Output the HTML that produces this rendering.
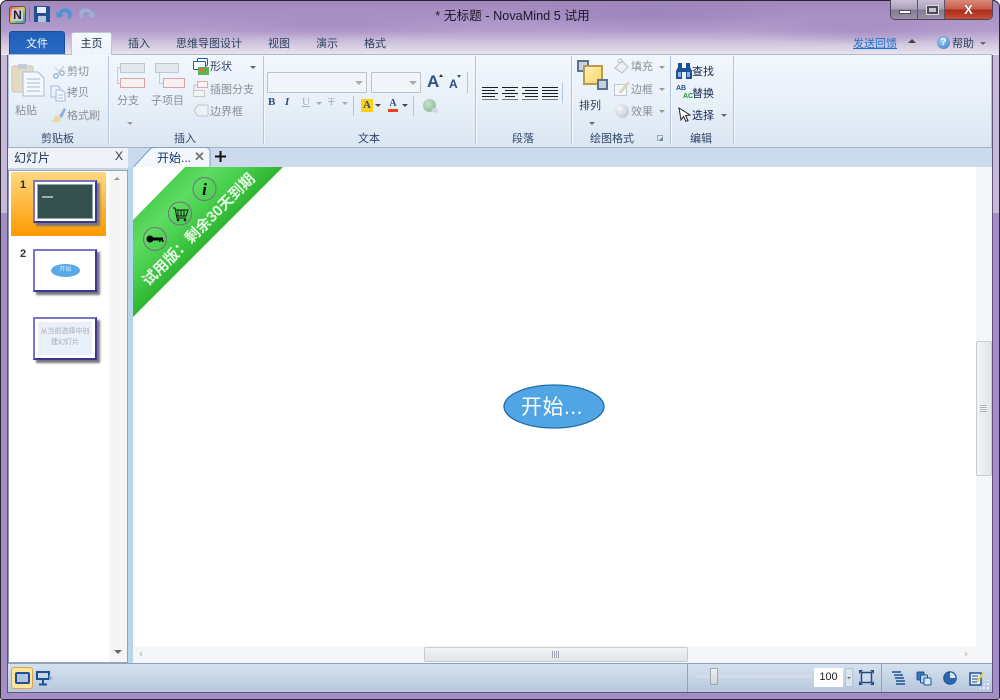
<!DOCTYPE html>
<html><head><meta charset="utf-8"><style>
*{box-sizing:border-box;margin:0;padding:0}
html,body{width:1000px;height:700px;overflow:hidden;background:#fff}
body{position:relative;font-family:"Liberation Sans","Noto Sans CJK SC",sans-serif;font-size:11px;color:#15284b}
.a{position:absolute;white-space:nowrap}
.g{color:#8b8f96}
.t{color:#2d3f5f}
.sep{position:absolute;top:56px;height:88px;width:1px;background:#b5c6da;box-shadow:1px 0 0 #f4f8fd}
.arr{position:absolute;width:0;height:0;border-left:3px solid transparent;border-right:3px solid transparent;border-top:3px solid #666}
.gl{position:absolute;top:130px;color:#2f4468;font-size:11px;white-space:nowrap}
.thumb{position:absolute;left:33px;width:64px;height:43px;background:#fff;border:2px solid;border-color:#7a74c8 #3b3694 #3b3694 #7a74c8;box-shadow:3px 3px 2px #77777a}
svg{position:absolute;overflow:visible}
</style></head><body>
<div class="a" style="left:0;top:0;width:1000px;height:700px;background:#c8b8da;border-radius:7px 7px 3px 3px"></div>
<div class="a" style="left:1px;top:213px;width:7px;height:480px;background:#a48dc4"></div>
<div class="a" style="left:992px;top:213px;width:7px;height:480px;background:#a48dc4"></div>
<div class="a" style="left:1px;top:692px;width:998px;height:7px;background:#a48dc4"></div>
<div class="a" style="left:1px;top:1px;width:998px;height:54px;border-radius:6px 6px 0 0;overflow:hidden;background:radial-gradient(ellipse 150px 14px at 330px 24px,rgba(160,135,190,.55),transparent),radial-gradient(ellipse 140px 22px at 650px 12px,rgba(150,125,185,.6),transparent),radial-gradient(ellipse 120px 16px at 860px 28px,rgba(155,130,185,.5),transparent),linear-gradient(180deg,#a189bd 0%,#a890c4 25%,#b39dcd 55%,#c8bad9 72%,#e1dbe8 92%,#ebe6ef 100%)"></div>
<div class="a" style="left:0;top:0;width:1000px;height:700px;border:1px solid #2a2630;border-radius:7px 7px 3px 3px"></div>
<div class="a" style="left:7px;top:55px;width:1px;height:638px;background:#5d5578"></div>
<div class="a" style="left:992px;top:55px;width:1px;height:638px;background:#5d5578"></div>

<!-- quick access -->
<div class="a" style="left:9px;top:6px;width:17px;height:18px;border-radius:3px;background:linear-gradient(135deg,#e85a5a,#e9c84c 45%,#61bd6d 70%,#4f84d8);border:1px solid #555"></div>
<div class="a" style="left:12px;top:9px;width:11px;height:12px;background:#cfcbd6;color:#23202c;font:bold 12px/12px 'Liberation Sans',sans-serif;text-align:center">N</div>
<div class="a" style="left:29px;top:7px;width:1px;height:15px;background:#857b99"></div>
<svg style="left:34px;top:6px" width="16" height="16" viewBox="0 0 16 16"><path d="M0 0H15L16 1V16H0Z" fill="#20508f"/><rect x="3" y="1" width="9" height="6" fill="#e8eef7"/><rect x="4" y="10" width="8" height="6" fill="#b4c6de"/></svg>
<svg style="left:56px;top:6px" width="17" height="15" viewBox="0 0 17 15"><path d="M2 8C3 3 11 0 15 5C17 8 15 12 12 14C13 10 12 6 9 6C7 6 6 7 5 8L8 10L1 12L0 5Z" fill="#4c93d6"/></svg>
<svg style="left:78px;top:6px" width="17" height="15" viewBox="0 0 17 15"><path d="M15 8C14 3 6 0 2 5C0 8 2 12 5 14C4 10 5 6 8 6C10 6 11 7 12 8L9 10L16 12L17 5Z" fill="#9eb1d4"/></svg>
<div class="a" style="left:0;top:5px;width:1025px;text-align:center;font-size:12.7px;color:#1b1726">* 无标题 - NovaMind 5 试用</div>

<!-- window buttons -->
<div class="a" style="left:890px;top:0;width:103px;height:20px;border:1px solid #4c4456;border-top:0;border-radius:0 0 5px 5px;overflow:hidden;display:flex">
<div style="width:27px;background:linear-gradient(180deg,#c9bfd6,#aba0bb 48%,#847a94 52%,#9a91a8);border-right:1px solid #5d5468;position:relative"><div style="position:absolute;left:8px;top:10px;width:12px;height:4px;background:#fff;border:1px solid #4b4a58"></div></div>
<div style="width:27px;background:linear-gradient(180deg,#c9bfd6,#aba0bb 48%,#847a94 52%,#9a91a8);border-right:1px solid #5d5468;position:relative"><div style="position:absolute;left:9px;top:6px;width:11px;height:8px;border:2px solid #4b4a58;background:#c8c2d2;box-shadow:0 0 0 1px #ddd"></div></div>
<div style="flex:1;background:linear-gradient(180deg,#d98a7c,#c65c4b 48%,#ad2a18 52%,#c4503a);position:relative;color:#fff;font:bold 13px/19px 'Liberation Sans',sans-serif;text-align:center;text-shadow:0 0 1px #444">X</div>
</div>

<!-- tabs -->
<div class="a" style="left:9px;top:31px;width:56px;height:23px;background:linear-gradient(180deg,#1f5fb8,#2a6ac5);border:1px solid #1c4e98;border-bottom:0;border-radius:3px 3px 0 0;color:#fff;font-size:11px;line-height:24px;text-align:center">文件</div>
<div class="a" style="left:71px;top:32px;width:41px;height:23px;background:linear-gradient(180deg,#f6f9fd,#eef4fb);border:1px solid #b9c6d9;border-bottom:0;border-radius:3px 3px 0 0;font-size:11px;line-height:22px;text-align:center;color:#14233f;z-index:3">主页</div>
<div class="a t" style="left:128px;top:35px">插入</div>
<div class="a t" style="left:176px;top:35px">思维导图设计</div>
<div class="a t" style="left:268px;top:35px">视图</div>
<div class="a t" style="left:316px;top:35px">演示</div>
<div class="a t" style="left:364px;top:35px">格式</div>
<div class="a" style="left:853px;top:35px;color:#1a6fd0;text-decoration:underline">发送回馈</div>
<div class="a" style="left:908px;top:39px;width:0;height:0;border-left:4px solid transparent;border-right:4px solid transparent;border-bottom:4px solid #444"></div>
<div class="a" style="left:937px;top:36px;width:13px;height:13px;border-radius:50%;background:radial-gradient(circle at 40% 35%,#a5d0f2,#2f76c7);color:#fff;font:bold 10px/13px 'Liberation Sans';text-align:center">?</div>
<div class="a t" style="left:952px;top:35px">帮助</div>
<div class="arr" style="left:980px;top:42px"></div>

<!-- ribbon -->
<div class="a" style="left:8px;top:54px;width:984px;height:94px;background:linear-gradient(180deg,#f2f7fd 0%,#e7eff8 55%,#dbe6f3 100%);border:1px solid #b4c4d9;border-top-color:#a9bbd3;border-bottom-color:#9fb1c9"></div>
<div class="sep" style="left:108px"></div>
<div class="sep" style="left:263px"></div>
<div class="sep" style="left:475px"></div>
<div class="sep" style="left:571px"></div>
<div class="sep" style="left:670px"></div>
<div class="sep" style="left:733px"></div>

<!-- clipboard -->
<svg style="left:12px;top:64px" width="33" height="33" viewBox="0 0 33 33"><rect x="0" y="2" width="21" height="26" rx="2" fill="#e4d9c3" stroke="#cfc5b3"/><rect x="6" y="0" width="9" height="5" fill="#c3ccd8"/><path d="M11 8H26L32 14V32H11Z" fill="#f4f7fb" stroke="#a9bdd6"/><path d="M15 15H28M15 19H28M15 23H28M15 27H28" stroke="#a9bdd6"/></svg>
<div class="a g" style="left:15px;top:102px">粘贴</div>
<svg style="left:52px;top:65px" width="14" height="14" viewBox="0 0 14 14"><circle cx="4" cy="11" r="2.2" fill="none" stroke="#8fb0d8" stroke-width="1.3"/><circle cx="10" cy="8" r="2.2" fill="none" stroke="#8fb0d8" stroke-width="1.3"/><path d="M5 9L12 1M3 3L9 7" stroke="#c1c7d0"/></svg>
<div class="a g" style="left:67px;top:63px">剪切</div>
<svg style="left:50px;top:85px" width="16" height="16" viewBox="0 0 16 16"><path d="M1 1H8L10 3V12H1Z" fill="#eef3fa" stroke="#a3bcd9"/><path d="M6 5H12L15 8V16H6Z" fill="#f4f7fb" stroke="#a3bcd9"/><path d="M8 10H13M8 13H13" stroke="#a3bcd9"/></svg>
<div class="a g" style="left:67px;top:84px">拷贝</div>
<svg style="left:51px;top:107px" width="16" height="16" viewBox="0 0 16 16"><path d="M1 15L5 8L10 11L8 15Z" fill="#ecd79d"/><path d="M8 9L13 1L15 2L11 11Z" fill="#8fb0d8"/></svg>
<div class="a g" style="left:67px;top:107px">格式刷</div>
<div class="gl" style="left:41px">剪贴板</div>

<!-- insert -->
<svg style="left:115px;top:61px" width="32" height="28" viewBox="0 0 32 28"><rect x="5.5" y="2.5" width="24" height="9" fill="#e3e8ef" stroke="#c0c7d1"/><rect x="5.5" y="17.5" width="24" height="9" fill="#f7f1f1" stroke="#dba4a4"/><path d="M2.5 6.5V22.5H5M2.5 6.5H5" fill="none" stroke="#c5ccd5"/></svg>
<div class="a g" style="left:117px;top:92px">分支</div>
<div class="arr" style="left:127px;top:122px;border-top-color:#999"></div>
<svg style="left:154px;top:61px" width="32" height="28" viewBox="0 0 32 28"><rect x="1.5" y="2.5" width="23" height="9" fill="#e3e8ef" stroke="#c0c7d1"/><rect x="9.5" y="17.5" width="21" height="9" fill="#f7f1f1" stroke="#dba4a4"/><path d="M5.5 12V22.5H9" fill="none" stroke="#c5ccd5"/></svg>
<div class="a g" style="left:151px;top:92px">子项目</div>
<svg style="left:193px;top:58px" width="17" height="17" viewBox="0 0 17 17"><rect x="4.5" y="0.5" width="10" height="7" rx="1" fill="#fff" stroke="#1c5aa8"/><rect x="0.5" y="3.5" width="12" height="8" rx="1" fill="#fff" stroke="#1c5aa8"/><rect x="5" y="9" width="11" height="8" fill="#63b04f"/><rect x="7" y="10" width="4" height="3" fill="#e76f33"/></svg>
<div class="a t" style="left:210px;top:58px">形状</div>
<div class="arr" style="left:250px;top:66px"></div>
<svg style="left:193px;top:81px" width="15" height="16" viewBox="0 0 15 16"><rect x="4.5" y="0.5" width="10" height="6" fill="#f8f4f4" stroke="#dcaaaa"/><rect x="0.5" y="9.5" width="11" height="6" fill="#f3f3f3" stroke="#c8c8c8"/><path d="M4 4H1V10" fill="none" stroke="#c0c0c0"/></svg>
<div class="a g" style="left:210px;top:81px">插图分支</div>
<svg style="left:193px;top:104px" width="16" height="13" viewBox="0 0 16 13"><path d="M5 1H15V12H5L1 6.5Z" fill="#edf0f5" stroke="#bdc6d2"/></svg>
<div class="a g" style="left:210px;top:103px">边界框</div>
<div class="gl" style="left:174px">插入</div>

<!-- text -->
<div class="a" style="left:267px;top:72px;width:100px;height:21px;background:#f1f4f8;border:1px solid #bcc2c9;border-radius:1px"></div>
<div class="arr" style="left:355px;top:81px;border-left-width:4px;border-right-width:4px;border-top:4px solid #aaa"></div>
<div class="a" style="left:371px;top:72px;width:50px;height:21px;background:#f1f4f8;border:1px solid #bcc2c9;border-radius:1px"></div>
<div class="arr" style="left:409px;top:81px;border-left-width:4px;border-right-width:4px;border-top:4px solid #aaa"></div>
<div class="a" style="left:427px;top:73px;font:bold 17px/17px 'Liberation Sans';color:#2c4f84">A</div>
<div class="a" style="left:439px;top:74px;width:0;height:0;border-left:2px solid transparent;border-right:2px solid transparent;border-bottom:3px solid #333"></div>
<div class="a" style="left:449px;top:78px;font:bold 12px/12px 'Liberation Sans';color:#2c4f84">A</div>
<div class="a" style="left:457px;top:75px;width:0;height:0;border-left:2px solid transparent;border-right:2px solid transparent;border-top:3px solid #2c4f84"></div>
<div class="a" style="left:467px;top:72px;width:1px;height:21px;background:#b5c6da"></div>
<div class="a" style="left:268px;top:96px;font:bold 11px/12px 'Liberation Serif';color:#2c4f84">B</div>
<div class="a" style="left:285px;top:96px;font:italic bold 11px/12px 'Liberation Serif';color:#2c4f84">I</div>
<div class="a" style="left:302px;top:96px;font:11px/12px 'Liberation Serif';color:#a9b2bf;text-decoration:underline">U</div>
<div class="arr" style="left:316px;top:102px;border-top-color:#aaa"></div>
<div class="a" style="left:328px;top:96px;font:11px/12px 'Liberation Serif';color:#a9b2bf;text-decoration:line-through">T</div>
<div class="arr" style="left:342px;top:102px;border-top-color:#aaa"></div>
<div class="a" style="left:353px;top:96px;width:1px;height:20px;background:#b5c6da"></div>
<div class="a" style="left:361px;top:99px;width:12px;height:13px;background:#fcd116;font:bold 11px/13px 'Liberation Serif';color:#2c4f84;text-align:center">A</div>
<div class="arr" style="left:375px;top:104px;border-top-color:#444"></div>
<div class="a" style="left:388px;top:99px;width:10px;height:10px;font:bold 10px/10px 'Liberation Serif';color:#2c4f84;text-align:center">A</div>
<div class="a" style="left:388px;top:109px;width:10px;height:3px;background:#f1401c"></div>
<div class="arr" style="left:402px;top:104px;border-top-color:#444"></div>
<div class="a" style="left:413px;top:96px;width:1px;height:20px;background:#b5c6da"></div>
<div class="a" style="left:423px;top:99px;width:13px;height:13px;border-radius:50%;background:radial-gradient(circle at 40% 35%,#c4e2c8,#8bb09a)"></div>
<div class="a" style="left:432px;top:108px;width:6px;height:5px;border-radius:50%;background:#cfdae6"></div>
<div class="gl" style="left:358px">文本</div>

<!-- paragraph -->
<svg style="left:482px;top:87px" width="76" height="14" viewBox="0 0 76 14" fill="none"><g stroke-width="1">
<path d="M0 .5H16M0 3.5H13M0 6.5H16M0 9.5H13" stroke="#1c1c1c"/><path d="M0 12.500H16" stroke="#777"/>
<path d="M20 .5H36M23 3.5H33M20 6.5H36M23 9.5H33" stroke="#1c1c1c"/><path d="M20 12.500H36" stroke="#777"/>
<path d="M40 .5H56M43 3.5H56M40 6.5H56M43 9.5H56" stroke="#1c1c1c"/><path d="M40 12.500H56" stroke="#777"/>
<path d="M60 .5H76M60 3.5H76M60 6.5H76M60 9.5H76" stroke="#1c1c1c"/><path d="M60 12.500H76" stroke="#777"/></g></svg>
<div class="a" style="left:562px;top:83px;width:1px;height:20px;background:#b5c6da"></div>
<div class="gl" style="left:512px">段落</div>

<!-- drawing format -->
<div class="a" style="left:577px;top:60px;width:12px;height:12px;background:#c7d2e2;border:2px solid #5e7191"></div>
<div class="a" style="left:583px;top:65px;width:20px;height:20px;background:linear-gradient(135deg,#fdf0b4,#f8d862);border:2px solid #b99a55"></div>
<div class="a" style="left:597px;top:79px;width:11px;height:11px;background:#c7d2e2;border:2px solid #5e7191"></div>
<div class="a t" style="left:579px;top:97px">排列</div>
<div class="arr" style="left:589px;top:122px"></div>
<svg style="left:614px;top:59px" width="16" height="16" viewBox="0 0 16 16"><path d="M1 9L8 2L14 8L8 14Z" fill="#eef0f4" stroke="#b8bfc9"/><circle cx="6" cy="2" r="2" fill="none" stroke="#b8bfc9"/></svg>
<div class="a g" style="left:631px;top:58px">填充</div>
<div class="arr" style="left:659px;top:66px;border-top-color:#999"></div>
<svg style="left:614px;top:81px" width="16" height="15" viewBox="0 0 16 15"><rect x=".5" y="3.5" width="12" height="11" fill="#f4f6fa" stroke="#bcc5d1"/><path d="M5 11L14 1L15.500 2L7 12Z" fill="#e5d9a6" stroke="#c4bfae" stroke-width=".5"/></svg>
<div class="a g" style="left:631px;top:81px">边框</div>
<div class="arr" style="left:659px;top:88px;border-top-color:#999"></div>
<div class="a" style="left:615px;top:104px;width:13px;height:13px;border-radius:50%;background:radial-gradient(circle at 35% 35%,#f6f8fb,#b6c0ce);box-shadow:1px 1px 1px #c5c9cf"></div>
<div class="a g" style="left:631px;top:103px">效果</div>
<div class="arr" style="left:659px;top:110px;border-top-color:#999"></div>
<div class="gl" style="left:590px">绘图格式</div>
<div class="a" style="left:657px;top:135px;width:6px;height:6px;border-left:1px solid #98a4b3;border-top:1px solid #98a4b3;background:linear-gradient(135deg,transparent 55%,#7b8899 55%)"></div>

<!-- edit -->
<svg style="left:676px;top:63px" width="16" height="16" viewBox="0 0 16 16"><path d="M2 0H6V5H10V0H14V4L16 8V16H10V9H6V16H0V8L2 4Z" fill="#1d5196"/><path d="M2 9H5V14H2ZM11 9H14V14H11Z" fill="#8ab1dd"/></svg>
<div class="a" style="left:692px;top:63px;color:#15284b">查找</div>
<div class="a" style="left:676px;top:85px;font:bold 7px/8px 'Liberation Sans';color:#1d5196">AB</div>
<div class="a" style="left:683px;top:93px;font:bold 7px/8px 'Liberation Sans';color:#1a9a3a">AC</div>
<div class="a" style="left:692px;top:85px;color:#15284b">替换</div>
<svg style="left:678px;top:107px" width="13" height="15" viewBox="0 0 13 15"><path d="M1 1L12 8L7.500 8.500L10 13.500L8 14.500L5.500 9.500L3 13Z" fill="#fff" stroke="#222"/></svg>
<div class="a" style="left:692px;top:107px;color:#15284b">选择</div>
<div class="arr" style="left:721px;top:114px"></div>
<div class="gl" style="left:690px">编辑</div>

<!-- panel -->
<div class="a" style="left:8px;top:148px;width:984px;height:19px;background:#cbdaec"></div>
<div class="a" style="left:8px;top:148px;width:120px;height:22px;background:#eff2f7;border-bottom:2px solid #c7d4e4"></div>
<div class="a" style="left:14px;top:149px;font-size:12px;color:#1a2e52">幻灯片</div>
<div class="a" style="left:115px;top:149px;font-size:12px;color:#333a47">X</div>
<div class="a" style="left:8px;top:170px;width:120px;height:493px;background:#fff;border:1px solid #97a4b6;border-left-color:#8a97a9"></div>
<div class="a" style="left:109px;top:171px;width:18px;height:491px;background:#f5f5f6"></div>
<div class="a" style="left:114px;top:177px;width:0;height:0;border-left:3px solid transparent;border-right:3px solid transparent;border-bottom:3px solid #999"></div>
<div class="arr" style="left:114px;top:650px;border-left-width:4px;border-right-width:4px;border-top:4px solid #666"></div>
<div class="a" style="left:11px;top:172px;width:95px;height:64px;background:linear-gradient(180deg,#ffd97e,#ffb53a 55%,#ff9a00)"></div>
<div class="a" style="left:20px;top:179px;font:bold 11px/12px 'Liberation Sans';color:#2b2b2b">1</div>
<div class="thumb" style="top:180px;padding:2px"><div style="width:100%;height:100%;background:#33504f;border:1px solid #8fa8a4;position:relative"><div style="position:absolute;left:4px;top:11px;width:11px;height:2px;background:#b8c4c4;opacity:.8"></div></div></div>
<div class="a" style="left:20px;top:248px;font:bold 11px/12px 'Liberation Sans';color:#333">2</div>
<div class="thumb" style="top:249px"><div style="position:absolute;left:16px;top:13px;width:29px;height:13px;border-radius:50%;background:#5aa9e6;color:#d6eafa;font-size:6px;line-height:13px;text-align:center">开始</div></div>
<div class="thumb" style="top:317px;padding:3px"><div style="width:100%;height:100%;background:#eaf0fa;color:#a6a8ae;font-size:7px;line-height:11px;text-align:center;white-space:normal;padding-top:4px">从当前选择中创建幻灯片</div></div>

<!-- tab -->
<div class="a" style="left:128px;top:167px;width:5px;height:496px;background:#b6d7ea"></div>
<svg style="left:133px;top:147px" width="80" height="21" viewBox="0 0 80 21"><path d="M0 20.500L17 2C18 1 19 .5 21 .5H72C75 .5 77 2 77 5V20.500" fill="#f4f7fc" stroke="#7f9fc6"/><rect x="1" y="20" width="75.500" height="1.500" fill="#f7fafe"/></svg>
<div class="a" style="left:157px;top:149px;font-size:12px;color:#10386f">开始...</div>
<div class="a" style="left:194px;top:149px;font:bold 13px/15px 'Liberation Sans';color:#777">✕</div>
<svg style="left:215px;top:151px" width="11" height="11" viewBox="0 0 11 11"><path d="M5.500 0V11M0 5.500H11" stroke="#111" stroke-width="2"/></svg>

<!-- canvas -->
<div class="a" style="left:133px;top:167px;width:843px;height:479px;background:#fff;overflow:hidden">
<svg style="left:0;top:0" width="160" height="160" viewBox="0 0 160 160"><defs><linearGradient id="gg" x1="26" y1="26" x2="75" y2="75" gradientUnits="userSpaceOnUse"><stop offset="0" stop-color="#4ccf50"/><stop offset=".3" stop-color="#5cdc60"/><stop offset=".6" stop-color="#49cf4e"/><stop offset="1" stop-color="#2db52f"/></linearGradient></defs><polygon points="52,0 150,0 0,150 0,53" fill="url(#gg)"/>
<circle cx="71.500" cy="22" r="11.500" fill="none" stroke="#7b6a80"/><text x="71.500" y="28" text-anchor="middle" font-family="Liberation Serif" font-style="italic" font-weight="bold" font-size="17" fill="#000">i</text>
<circle cx="47" cy="46.500" r="11.500" fill="none" stroke="#7b6a80"/><path d="M40 41H42L44 51H53M43 43H55L53 49H44M45 43V49M48 43V49M51 43V49" fill="none" stroke="#111"/><circle cx="45" cy="53" r="1.300" fill="#111"/><circle cx="52" cy="53" r="1.300" fill="#111"/>
<circle cx="22" cy="72" r="11.500" fill="none" stroke="#7b6a80"/><circle cx="17" cy="72" r="3.500" fill="#000"/><rect x="19" y="70.500" width="11" height="3" fill="#000"/><rect x="26" y="73" width="1.500" height="2" fill="#000"/><rect x="29" y="73" width="1.500" height="2" fill="#000"/>
<text transform="translate(66,63) rotate(-45)" text-anchor="middle" dominant-baseline="central" font-family="Liberation Sans,Noto Sans CJK SC,sans-serif" font-weight="bold" font-size="15" fill="#e4f9e3">试用版：剩余30天到期</text></svg>
<svg style="left:370px;top:217px" width="102" height="45" viewBox="0 0 102 45"><ellipse cx="51" cy="22.500" rx="50" ry="21.500" fill="#52a5e4" stroke="#1e6da6" stroke-width="1.300"/></svg>
<div class="a" style="left:388px;top:226px;font-size:21px;line-height:29px;color:#fff;letter-spacing:.5px">开始...</div>
</div>

<!-- v scrollbar -->
<div class="a" style="left:976px;top:167px;width:16px;height:496px;background:#f5f6f7"></div>
<div class="a" style="left:976px;top:341px;width:16px;height:135px;background:linear-gradient(90deg,#f1f3f5,#e2e5e9);border:1px solid #c9cdd3;border-radius:2px"></div>
<div class="a" style="left:980px;top:405px;width:7px;height:7px;background:repeating-linear-gradient(180deg,#aab0b8 0 1px,#f3f4f6 1px 2px)"></div>
<!-- h scrollbar -->
<div class="a" style="left:133px;top:646px;width:859px;height:17px;background:#f5f6f7"></div>
<div class="a" style="left:424px;top:647px;width:264px;height:15px;background:linear-gradient(180deg,#f1f3f5,#e2e5e9);border:1px solid #c9cdd3;border-radius:2px"></div>
<div class="a" style="left:552px;top:651px;width:7px;height:7px;background:repeating-linear-gradient(90deg,#9aa1aa 0 1px,#f3f4f6 1px 2px)"></div>
<div class="a" style="left:139px;top:651px;width:0;height:0;border-top:3px solid transparent;border-bottom:3px solid transparent;border-right:3px solid #ccc"></div>
<div class="a" style="left:965px;top:651px;width:0;height:0;border-top:3px solid transparent;border-bottom:3px solid transparent;border-left:3px solid #ccc"></div>

<!-- status -->
<div class="a" style="left:8px;top:663px;width:984px;height:30px;background:linear-gradient(180deg,#d5e1ef,#b7c7dc);border-top:1px solid #8ea3bf;border-bottom:1px solid #5d5a77"></div>
<div class="a" style="left:687px;top:664px;width:1px;height:28px;background:#8ea3bf"></div>
<div class="a" style="left:881px;top:664px;width:1px;height:28px;background:#8ea3bf"></div>
<div class="a" style="left:11px;top:667px;width:22px;height:22px;background:#fde59b;border:1px solid #d9a24c;border-radius:3px"></div>
<div class="a" style="left:15px;top:672px;width:15px;height:12px;background:#b4c4dd;border:2px solid #1d5196;border-radius:2px"></div>
<svg style="left:36px;top:671px" width="17" height="15" viewBox="0 0 17 15"><path d="M1 1H13V8H1ZM7 8V13M3 13.500H11" fill="none" stroke="#1d5196" stroke-width="2"/><path d="M13 4L16.500 7L13 10Z" fill="#7ea6d8"/></svg>
<div class="a" style="left:696px;top:675px;width:115px;height:3px;background:#d2dbe7;border-radius:2px"></div>
<div class="a" style="left:710px;top:668px;width:8px;height:17px;background:linear-gradient(180deg,#f1f1f1,#cfd4db);border:1px solid #a0a7b1;border-radius:1px"></div>
<div class="a" style="left:814px;top:668px;width:29px;height:19px;background:#fff;font-size:11px;line-height:19px;text-align:center;color:#222">100</div>
<div class="a" style="left:845px;top:668px;width:8px;height:19px;background:#d9e4f1;border:1px solid #b4c3d6;border-radius:2px"></div>
<div class="a" style="left:847px;top:677px;width:0;height:0;border-left:2px solid transparent;border-right:2px solid transparent;border-top:2px solid #666"></div>
<svg style="left:859px;top:670px" width="15" height="15" viewBox="0 0 15 15"><rect x="2.500" y="2.500" width="10" height="10" fill="#cfdcec" stroke="#244b7f" stroke-width="1.500"/><path d="M0 0H4L0 4ZM15 0H11L15 4ZM0 15H4L0 11ZM15 15H11L15 11Z" fill="#244b7f"/></svg>
<svg style="left:891px;top:671px" width="15" height="15" viewBox="0 0 15 15"><path d="M1 1H10M3 4H12M4 7H13M5 10H14M5 13H14" stroke="#1d5196" stroke-width="1.600"/></svg>
<svg style="left:916px;top:671px" width="16" height="15" viewBox="0 0 16 15"><rect x="1" y="1" width="7" height="8" rx="1" fill="#3f74b8" stroke="#1d5196"/><rect x="4.500" y="4" width="7" height="8" rx="1" fill="#bcd2ec" stroke="#1d5196"/><rect x="8" y="7" width="7" height="7" rx="1" fill="#d9e6f5" stroke="#1d5196"/></svg>
<svg style="left:943px;top:671px" width="14" height="14" viewBox="0 0 14 14"><circle cx="7" cy="7" r="6.300" fill="#2c66ae" stroke="#1d5196"/><path d="M7 7V1.500A5.500 5.500 0 0 1 12.500 7Z" fill="#d9e6f5"/></svg>
<svg style="left:969px;top:671px" width="16" height="15" viewBox="0 0 16 15"><rect x="1" y="2" width="11" height="12" fill="#e5edf7" stroke="#1d5196" stroke-width="1.500"/><path d="M3 5H9M3 8H9M3 11H8" stroke="#1d5196"/><path d="M7 10L14 1L15.500 2L9 11Z" fill="#e4d34e"/></svg>
<div class="a" style="left:978px;top:678px;width:12px;height:12px;background:radial-gradient(circle,#eef3f9 0 1px,transparent 1.200px);background-size:4px 4px;clip-path:polygon(100% 0,100% 100%,0 100%)"></div>
</body></html>
